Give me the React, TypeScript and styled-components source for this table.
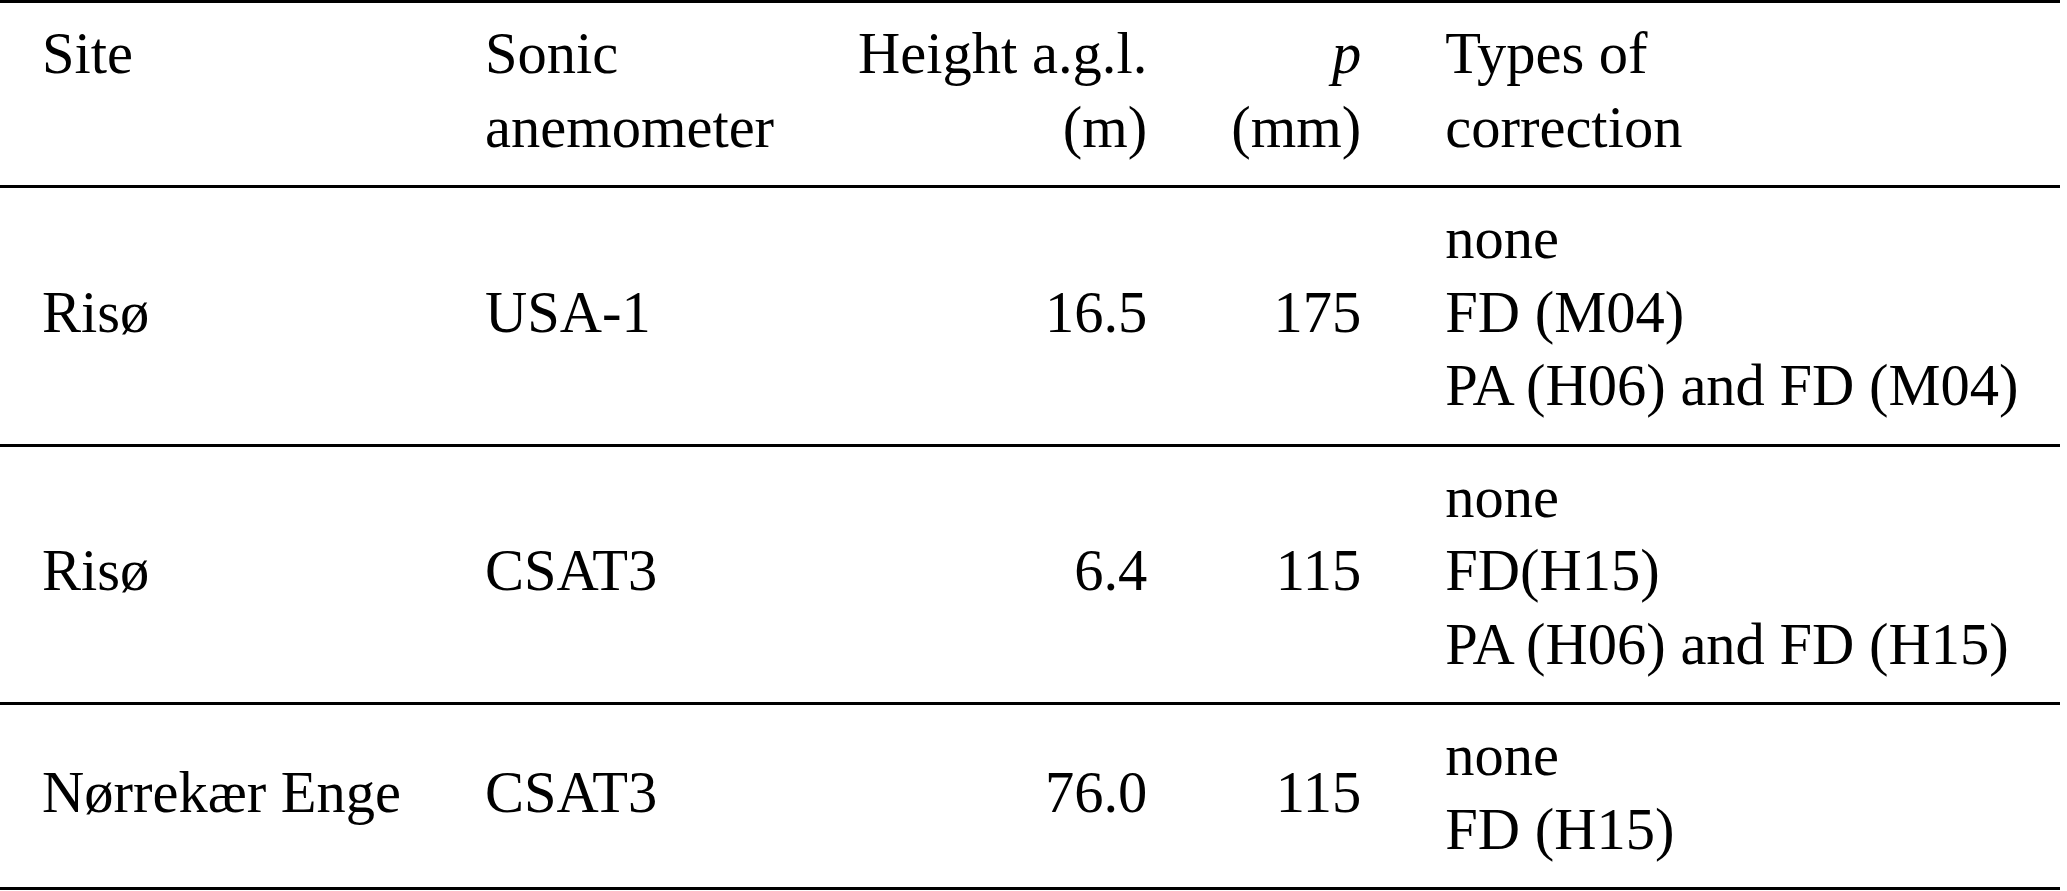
import React from "react";
import styled, { createGlobalStyle } from "styled-components";

const GlobalStyle = createGlobalStyle`
  html, body {
    margin: 0;
    padding: 0;
    background: #ffffff;
    overflow: hidden;
  }
  body {
    font-family: "Liberation Serif", "Times New Roman", serif;
    color: #000;
  }
`;

const Table = styled.table`
  border-collapse: collapse;
  border-spacing: 0;
  font-family: "Liberation Serif", "Times New Roman", serif;
  font-size: 58.5px;
  line-height: 73.5px;
  color: #000;
  border-top: 3px solid #000;
  border-bottom: 3px solid #000;
`;

const Row = styled.tr`
  border-bottom: 3px solid #000;
  tbody > &:last-child {
    border-bottom: none;
  }
`;

const HeadCell = styled.th<{ $align?: "left" | "right" }>`
  font-weight: normal;
  text-align: ${(p) => p.$align ?? "left"};
  vertical-align: top;
  padding: 14px 42px 21px;
  white-space: nowrap;
`;

const Cell = styled.td<{ $align?: "left" | "right" }>`
  text-align: ${(p) => p.$align ?? "left"};
  vertical-align: middle;
  padding: 14px 42px 21px;
  white-space: nowrap;
`;

const Line = styled.div``;

const Ital = styled.i`
  font-style: italic;
`;

type Entry = {
  site: string;
  sonic: string;
  height: string;
  p: string;
  corrections: string[];
};

const rows: Entry[] = [
  {
    site: "Risø",
    sonic: "USA-1",
    height: "16.5",
    p: "175",
    corrections: ["none", "FD (M04)", "PA (H06) and FD (M04)"],
  },
  {
    site: "Risø",
    sonic: "CSAT3",
    height: "6.4",
    p: "115",
    corrections: ["none", "FD(H15)", "PA (H06) and FD (H15)"],
  },
  {
    site: "Nørrekær Enge",
    sonic: "CSAT3",
    height: "76.0",
    p: "115",
    corrections: ["none", "FD (H15)"],
  },
];

export default function App() {
  return (
    <>
      <GlobalStyle />
      <Table>
        <thead>
          <Row>
            <HeadCell>Site</HeadCell>
            <HeadCell>
              <Line>Sonic</Line>
              <Line>anemometer</Line>
            </HeadCell>
            <HeadCell $align="right">
              <Line>Height a.g.l.</Line>
              <Line>(m)</Line>
            </HeadCell>
            <HeadCell $align="right">
              <Line>
                <Ital>p</Ital>
              </Line>
              <Line>(mm)</Line>
            </HeadCell>
            <HeadCell>
              <Line>Types of</Line>
              <Line>correction</Line>
            </HeadCell>
          </Row>
        </thead>
        <tbody>
          {rows.map((r, i) => (
            <Row key={i}>
              <Cell>{r.site}</Cell>
              <Cell>{r.sonic}</Cell>
              <Cell $align="right">{r.height}</Cell>
              <Cell $align="right">{r.p}</Cell>
              <Cell>
                {r.corrections.map((c, j) => (
                  <Line key={j}>{c}</Line>
                ))}
              </Cell>
            </Row>
          ))}
        </tbody>
      </Table>
    </>
  );
}
